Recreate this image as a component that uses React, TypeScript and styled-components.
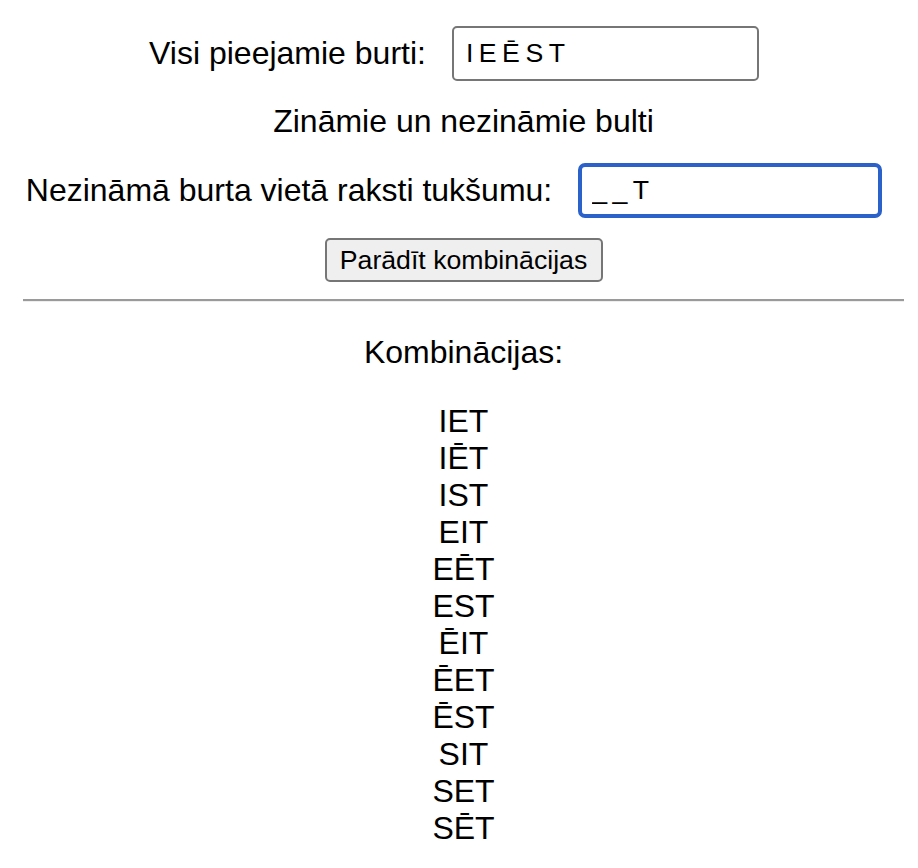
import React from 'react';
import styled, { createGlobalStyle } from 'styled-components';

const GlobalStyle = createGlobalStyle`
  body {
    margin: 0;
    padding: 0;
    background: #ffffff;
    color: #000000;
    font-family: 'Liberation Sans', Arial, sans-serif;
    font-size: 32px;
  }
`;

const Page = styled.div`
  display: flex;
  flex-direction: column;
  align-items: center;
  padding: 26px 14px 0 23px;
`;

const Row = styled.div`
  display: flex;
  align-items: center;
  gap: 26px;
  margin-right: 19px;
`;

const Label = styled.label`
  line-height: 37px;
`;

const TextInput = styled.input<{ $focused?: boolean }>`
  box-sizing: border-box;
  width: ${p => (p.$focused ? 304 : 307)}px;
  height: 55px;
  padding: 0 ${p => (p.$focused ? 10 : 12)}px;
  font-family: 'Liberation Sans', Arial, sans-serif;
  font-size: 26.67px;
  letter-spacing: 5.5px;
  color: #000;
  background: #fff;
  border: ${p => (p.$focused ? '4px solid #2a62c9' : '2px solid #767676')};
  border-radius: ${p => (p.$focused ? 7 : 5)}px;
  outline: none;
`;

const Heading = styled.div`
  margin: 22px 0 23px;
  line-height: 37px;
`;

const Button = styled.button`
  box-sizing: border-box;
  margin-top: 20px;
  width: 278px;
  height: 44px;
  padding: 0;
  font-family: 'Liberation Sans', Arial, sans-serif;
  font-size: 26.67px;
  color: #000;
  background: #efefef;
  border: 2px solid #767676;
  border-radius: 5px;
`;

const Divider = styled.hr`
  align-self: stretch;
  margin: 17px 0 0;
  border: 0;
  height: 2px;
  background: #9a9a9a;
  box-shadow: 0 1px 0 #eeeeee;
`;

const ResultTitle = styled.div`
  margin-top: 33px;
  line-height: 37px;
`;

const List = styled.div`
  margin-top: 32px;
  display: flex;
  flex-direction: column;
  align-items: center;
`;

const Item = styled.div`
  line-height: 37px;
`;

const combos = ['IET', 'IĒT', 'IST', 'EIT', 'EĒT', 'EST', 'ĒIT', 'ĒET', 'ĒST', 'SIT', 'SET', 'SĒT'];

function App() {
  return (
    <>
      <GlobalStyle />
      <Page>
        <Row>
          <Label>Visi pieejamie burti:</Label>
          <TextInput defaultValue="IEĒST" />
        </Row>
        <Heading>Zināmie un nezināmie bulti</Heading>
        <Row>
          <Label>Nezināmā burta vietā raksti tukšumu:</Label>
          <TextInput $focused defaultValue="__T" />
        </Row>
        <Button>Parādīt kombinācijas</Button>
        <Divider />
        <ResultTitle>Kombinācijas:</ResultTitle>
        <List>
          {combos.map(c => (
            <Item key={c}>{c}</Item>
          ))}
        </List>
      </Page>
    </>
  );
}

export default App;
